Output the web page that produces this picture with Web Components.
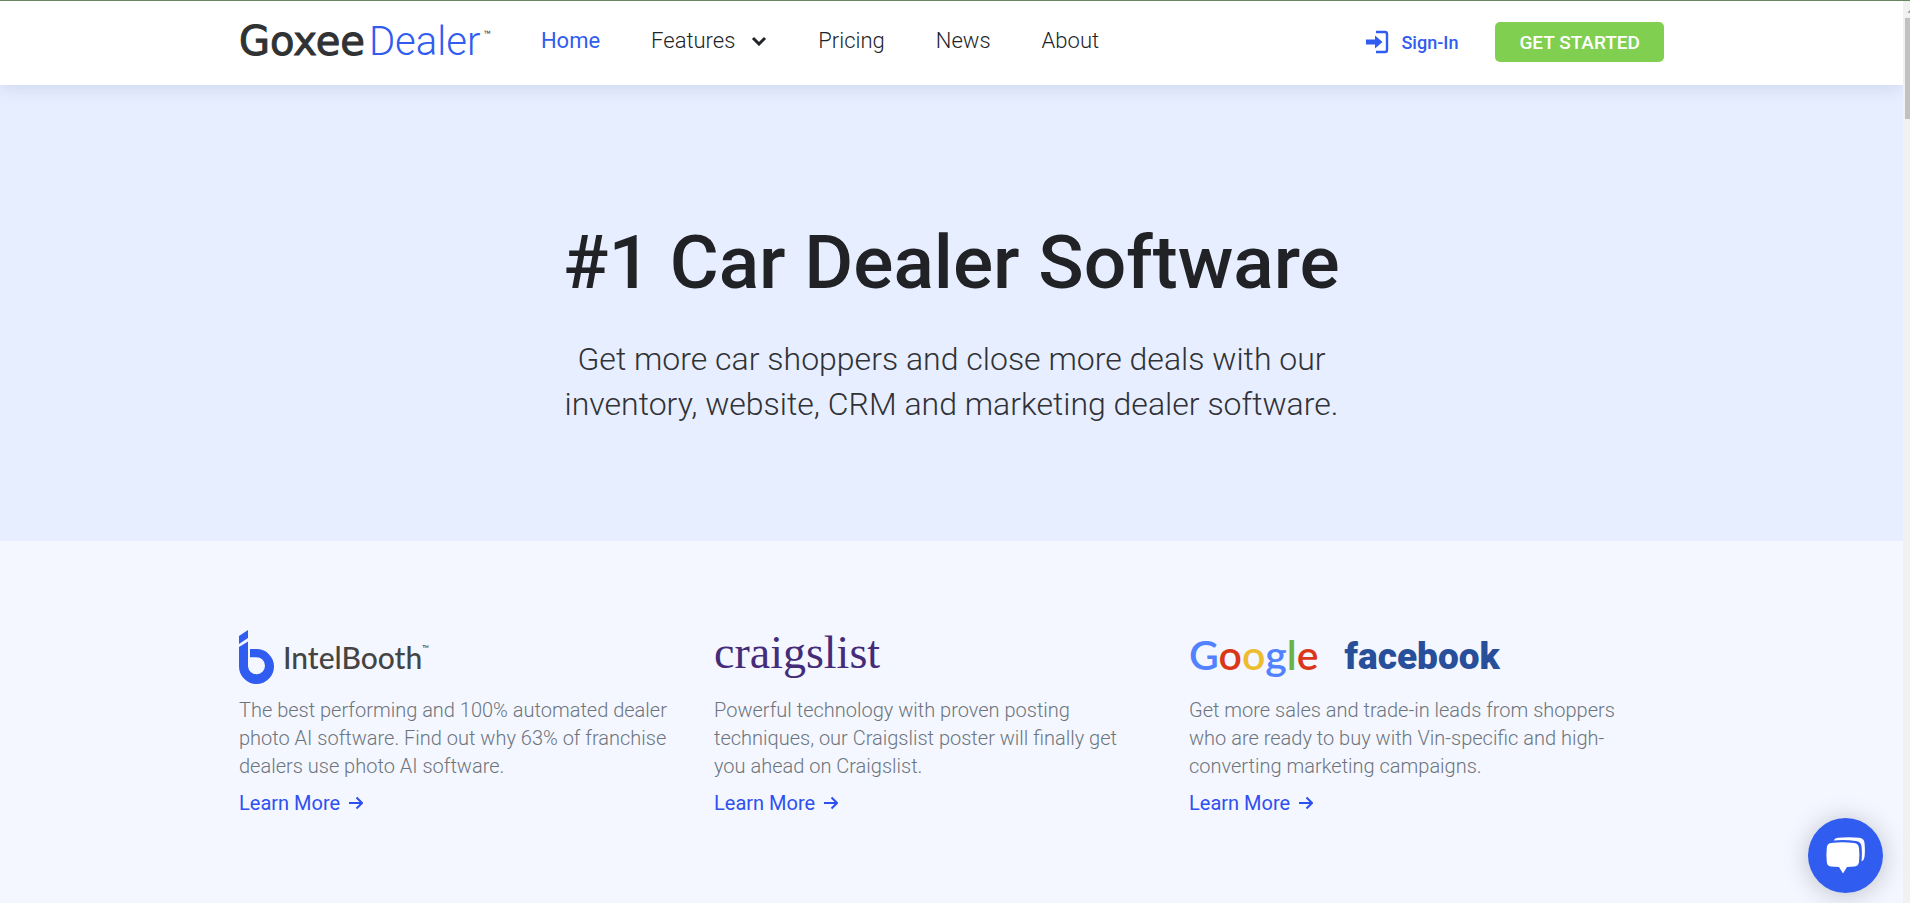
<!DOCTYPE html>
<html lang="en">
<head>
<meta charset="utf-8">
<meta name="viewport" content="width=device-width, initial-scale=1">
<title>Goxee Dealer</title>
<style>
	body {
		margin: 0;
		font-family: Roboto, "Liberation Sans", sans-serif;
		font-weight: 300;
		color: #212529;
		background: #f4f7ff;
	}
</style>
</head>
<body>
<gx-page>
	<gx-header slot="header"></gx-header>
	<gx-hero>
		<span slot="title">#1 Car Dealer Software</span>
		Get more car shoppers and close more deals with our inventory, website, CRM and marketing dealer software.
	</gx-hero>
	<gx-features>
		<gx-feature href="#intelbooth">
			<gx-brand slot="logo" name="intelbooth"></gx-brand>
			The best performing and 100% automated dealer photo AI software. Find out why 63% of franchise dealers use photo AI software.
		</gx-feature>
		<gx-feature href="#craigslist">
			<gx-brand slot="logo" name="craigslist"></gx-brand>
			Powerful technology with proven posting techniques, our Craigslist poster will finally get you ahead on Craigslist.
		</gx-feature>
		<gx-feature href="#marketing">
			<gx-brand slot="logo" name="google"></gx-brand>
			<gx-brand slot="logo" name="facebook"></gx-brand>
			Get more sales and trade-in leads from shoppers who are ready to buy with Vin-specific and high-converting marketing campaigns.
		</gx-feature>
	</gx-features>
	<gx-scroll-track slot="track"></gx-scroll-track>
</gx-page>
<gx-chat-button></gx-chat-button>

<script>
class GxElement extends HTMLElement {
	constructor() {
		super();
		this.attachShadow({ mode: "open" });
	}

	connectedCallback() {
		this.shadowRoot.innerHTML = this.template();
	}

	template() {
		return "";
	}
}

class GxPage extends GxElement {
	template() {
		return `
      <style>
        :host {
          display: grid;
          grid-template-columns: minmax(0, 1fr) 7px;
          min-height: 100vh;
          box-sizing: border-box;
          border-top: 1px solid #68855f;
        }
        .content { display: flex; flex-direction: column; min-width: 0; overflow: hidden; }
      </style>
      <div class="content">
        <slot name="header"></slot>
        <slot></slot>
      </div>
      <slot name="track"></slot>
    `;
	}
}

class GxHeader extends GxElement {
	template() {
		return `
      <style>
        :host {
          display: block;
          position: relative;
          z-index: 1;
          background: #fff;
          box-shadow: 0 2px 18px rgba(30, 50, 90, 0.13);
        }
        .bar {
          display: flex;
          align-items: center;
          box-sizing: border-box;
          width: 75%;
          max-width: 1425px;
          height: 84px;
          margin: 0 auto;
          padding-bottom: 2px;
        }
        nav { display: flex; align-items: center; gap: 51px; margin-left: 50px; padding-bottom: 2px; }
        a { color: inherit; text-decoration: none; }
        button { font: inherit; color: inherit; border: 0; cursor: pointer; }
        nav a, nav button { font-size: 22px; line-height: 32px; }
        nav a.active { color: #315cf0; font-weight: 400; }
        nav button {
          display: flex;
          align-items: center;
          gap: 16px;
          padding: 0;
          background: none;
        }
        .account { display: flex; align-items: center; gap: 37px; margin-left: auto; }
        .sign-in {
          display: flex;
          align-items: center;
          gap: 12px;
          color: #315cf0;
          font-size: 18px;
          font-weight: 500;
        }
        .start {
          height: 40px;
          padding: 0 24px;
          border-radius: 5px;
          background: #80cf50;
          color: #fff;
          font-size: 19px;
          font-weight: 500;
        }
      </style>
      <div class="bar">
        <gx-brand name="goxee"></gx-brand>
        <nav>
          <a class="active" href="#home">Home</a>
          <button type="button">Features
            <svg width="16" height="10" viewBox="0 0 16 10" fill="none" stroke="#212529" stroke-width="3" aria-hidden="true"><path d="M2 2l6 6 6-6"/></svg>
          </button>
          <a href="#pricing">Pricing</a>
          <a href="#news">News</a>
          <a href="#about">About</a>
        </nav>
        <div class="account">
          <a class="sign-in" href="#sign-in">
            <svg width="23" height="24" viewBox="0 0 23 24" aria-hidden="true">
              <path d="M10 2h9q2 0 2 2v16q0 2-2 2h-9" fill="none" stroke="#315cf0" stroke-width="2.4"/>
              <path d="M0 9.5h9V5.5l7.5 6.5L9 18.500v-4H0z" fill="#315cf0"/>
            </svg>
            Sign-In
          </a>
          <button class="start" type="button">GET STARTED</button>
        </div>
      </div>
    `;
	}
}

const BRANDS = {
	goxee: `
    <style>
      :host { font: 400 40px/48px "DejaVu Sans", sans-serif; color: #303234; }
      .heavy { -webkit-text-stroke: 1px #303234; }
      .light { margin-left: 4px; font: 300 40px/50px Roboto, sans-serif; color: #315cf0; }
      .tm { margin-left: 3px; font: 400 12px/36px Roboto, sans-serif; }
    </style>
    <span class="heavy">Goxee</span><span class="light">Dealer</span><span class="tm">™</span>
  `,
	intelbooth: `
    <style>
      :host { font: 500 30px/54px Lato, sans-serif; color: #444; }
      svg { margin-right: 9px; }
      .tm { font-size: 9px; line-height: 38px; }
    </style>
    <svg width="35" height="54" viewBox="0 0 35 54" fill="#315cf0" aria-hidden="true">
      <path d="M0 6L9 0v8L0 14z"/>
      <path d="M0 17l9-5.500v25a8.500 8.500 0 1 0 8.500-9.300H11V19h6.500A17.500 17.500 0 1 1 0 36.500z"/>
    </svg>
    <span>IntelBooth</span><span class="tm">™</span>
  `,
	craigslist: `
    <style>:host { font: 400 46px/46px "Liberation Serif", serif; color: #452c78; }</style>
    <span>craigslist</span>
  `,
	google: `
    <style>
      :host { font: 600 41px/50px Lato, sans-serif; color: #5282ff; }
      .red { color: #da3718; }
      .yellow { color: #edbd2f; }
      .green { color: #6cb146; }
    </style>
    <span>G<span class="red">o</span><span class="yellow">o</span>g<span class="green">l</span><span class="red">e</span></span>
  `,
	facebook: `
    <style>:host { font: 900 37px/54px Roboto, sans-serif; color: #284f99; }</style>
    <span>facebook</span>
  `,
};

class GxBrand extends GxElement {
	template() {
		return `
      <style>:host { display: flex; align-items: flex-start; white-space: nowrap; }</style>
      ${BRANDS[this.getAttribute("name")] || ""}
    `;
	}
}

class GxHero extends GxElement {
	template() {
		return `
      <style>
        :host {
          display: block;
          padding: 132px 24px 114px;
          background: #e7eeff;
          text-align: center;
        }
        h1 { margin: 0; font-size: 75px; line-height: 90px; font-weight: 500; color: #212226; }
        p { max-width: 800px; margin: 30px auto 0; font-size: 32px; line-height: 45px; color: #303236; }
      </style>
      <h1><slot name="title"></slot></h1>
      <p><slot></slot></p>
    `;
	}
}

class GxFeatures extends GxElement {
	template() {
		return `
      <style>
        :host {
          display: grid;
          grid-template-columns: repeat(3, minmax(0, 1fr));
          width: 75%;
          max-width: 1425px;
          margin: 0 auto;
          padding: 89px 0 60px;
        }
      </style>
      <slot></slot>
    `;
	}
}

class GxFeature extends GxElement {
	template() {
		return `
      <style>
        :host { display: block; padding-right: 45px; }
        .logos { display: flex; gap: 26px; min-height: 54px; }
        p { margin: 12px 0 8px; font-size: 20px; line-height: 28px; color: #6c757d; }
        a {
          display: inline-flex;
          align-items: center;
          gap: 9px;
          font-size: 20px;
          line-height: 30px;
          font-weight: 400;
          color: #2f50f0;
          text-decoration: none;
        }
      </style>
      <div class="logos"><slot name="logo"></slot></div>
      <p><slot></slot></p>
      <a href="${this.getAttribute("href")}">Learn More
        <svg width="14" height="14" viewBox="0 0 14 14" fill="none" stroke="currentColor" stroke-width="2" aria-hidden="true"><path d="M0 7h12M7.500 1.500L13 7l-5.500 5.500"/></svg>
      </a>
    `;
	}
}

class GxScrollTrack extends GxElement {
	template() {
		return `
      <style>
        :host { display: flex; flex-direction: column; align-items: flex-end; background: #f1f1f1; }
        svg { display: block; margin: 9px 0 5px; }
        .thumb { width: 5px; height: 101px; background: #c1c1c1; }
      </style>
      <svg width="2" height="3" aria-hidden="true"><path d="M0 3V2L2 0v3z" fill="#a3a3a3"/></svg>
      <div class="thumb"></div>
    `;
	}
}

class GxChatButton extends GxElement {
	template() {
		return `
      <style>
        :host { position: fixed; right: 27px; bottom: 10px; z-index: 2; }
        button {
          display: grid;
          place-items: center;
          width: 75px;
          height: 75px;
          padding: 0;
          border: 0;
          border-radius: 50%;
          background: #315cf0;
          box-shadow: 0 2px 26px rgba(0, 0, 0, 0.22);
          cursor: pointer;
        }
      </style>
      <button type="button" aria-label="Open chat">
        <svg width="39" height="38" viewBox="0 0 39 38" fill="#fff" aria-hidden="true">
          <path d="M5 6Q16 4.500 28 6q4.500.5 5 5 .8 7 0 14-.5 4-4.500 4.500l-7.500.5-4 6.500-4-6.500-8-.5Q1 29 .8 25 0 18 .8 11 1 6.500 5 6z"/>
          <path d="M7.500 3.500Q9 1 12 .8q11-1 21 0 5 .5 5.500 5.200.8 8 0 14-.5 3.500-3 4.500.8-8 0-15Q35 4.500 30 4q-11-1.500-22.500-.5z"/>
        </svg>
      </button>
    `;
	}
}

customElements.define("gx-page", GxPage);
customElements.define("gx-brand", GxBrand);
customElements.define("gx-header", GxHeader);
customElements.define("gx-hero", GxHero);
customElements.define("gx-features", GxFeatures);
customElements.define("gx-feature", GxFeature);
customElements.define("gx-scroll-track", GxScrollTrack);
customElements.define("gx-chat-button", GxChatButton);
</script>
</body>
</html>
